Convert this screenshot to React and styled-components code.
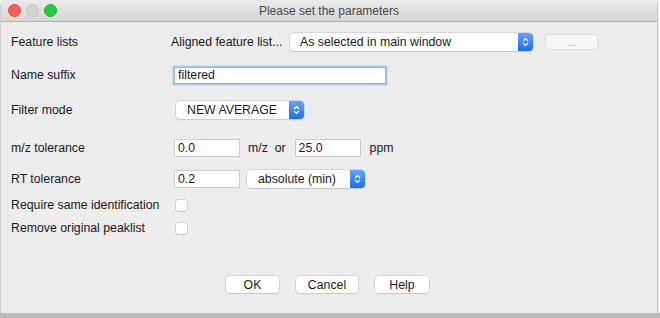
import React from 'react';
import styled, { createGlobalStyle } from 'styled-components';

const GlobalStyle = createGlobalStyle`
  html, body {
    margin: 0;
    padding: 0;
    background: #f4f4f4;
  }
  body {
    font-family: "Liberation Sans", Arial, sans-serif;
    font-size: 12.3px;
    color: #1b1b1b;
  }
`;

const Window = styled.div`
  width: 656px;
  height: 313px;
  background: #ececec;
  border-left: 1px solid #cfcfcf;
  border-right: 1px solid #c4c4c4;
  border-radius: 5px 5px 0 0;
  overflow: hidden;
  display: flex;
  flex-direction: column;
`;

const Ground = styled.div`
  width: 660px;
  height: 5px;
  background: #bcbcbc;
`;

const TitleBar = styled.div`
  height: 21px;
  flex: 0 0 21px;
  display: flex;
  align-items: center;
  position: relative;
  background: linear-gradient(#ebebeb, #d5d5d5);
  border-bottom: 1px solid #b4b4b4;
`;

const Lights = styled.div`
  display: flex;
  gap: 5px;
  padding-left: 7px;
`;

const Light = styled.span`
  width: 11px;
  height: 11px;
  border-radius: 50%;
  background: ${({ color }) => color};
  border: 0.5px solid ${({ edge }) => edge};
`;

const Title = styled.div`
  position: absolute;
  left: 0;
  right: 0;
  text-align: center;
  font-size: 12px;
  color: #4a4a4a;
  pointer-events: none;
`;

const Form = styled.div`
  padding: 10px 0 0 10px;
  display: flex;
  flex-direction: column;
`;

const Row = styled.div`
  display: flex;
  align-items: center;
  height: 20px;
  margin-top: ${({ gap }) => gap || 0}px;
`;

const Label = styled.div`
  width: 160px;
  flex: 0 0 160px;
  white-space: nowrap;
`;

const Cell = styled.div`
  display: flex;
  align-items: center;
  gap: ${({ gap }) => gap || 0}px;
  margin-left: ${({ shift }) => shift || 0}px;
`;

const Text = styled.span`
  white-space: pre;
  margin: ${({ m }) => m || '0'};
  ${({ w }) => w && `width: ${w}px;`}
`;

const Field = styled.div`
  box-sizing: border-box;
  width: ${({ w }) => w}px;
  height: 18px;
  background: #fff;
  border: 1px solid #cdcdcd;
  padding: 0 3px;
  display: flex;
  align-items: center;
  ${({ focus }) =>
    focus &&
    `
    border: 1px solid #8fb5e0;
    box-shadow: 0 0 0 1.5px #a9c9ee;
    height: 17px;
  `}
`;

const Combo = styled.div`
  box-sizing: border-box;
  width: ${({ w }) => w}px;
  height: 18px;
  background: #fff;
  border-radius: 4px;
  box-shadow: 0 0 0 0.5px #c2c2c2, 0 1px 1px rgba(0, 0, 0, 0.12);
  display: flex;
  align-items: center;
  overflow: hidden;
`;

const ComboText = styled.div`
  flex: 1;
  padding-left: ${({ pad }) => pad || 10}px;
  white-space: nowrap;
`;

const Arrow = styled.div`
  width: 15px;
  height: 100%;
  background: linear-gradient(#62a5f7, #1d6fe6);
  display: flex;
  align-items: center;
  justify-content: center;
`;

const Check = styled.span`
  width: 11px;
  height: 11px;
  box-sizing: border-box;
  background: #fff;
  border-radius: 2px;
  box-shadow: 0 0 0 0.5px #b8b8b8, 0 1px 1px rgba(0, 0, 0, 0.1);
  margin-left: 5px;
`;

const Dots = styled.div`
  width: 53px;
  height: 16px;
  background: #f6f6f6;
  border: 1px solid #dedede;
  border-radius: 4px;
  box-sizing: border-box;
  color: #a8a8a8;
  font-size: 10px;
  display: flex;
  align-items: center;
  justify-content: center;
  margin-left: 12px;
`;

const Footer = styled.div`
  margin-top: auto;
  margin-bottom: 20px;
  display: flex;
  justify-content: center;
  gap: 17px;
  padding-right: 3px;
`;

const Button = styled.div`
  box-sizing: border-box;
  width: ${({ w }) => w}px;
  height: 17px;
  background: #fff;
  border-radius: 4px;
  box-shadow: 0 0 0 0.5px #bdbdbd, 0 1px 1px rgba(0, 0, 0, 0.12);
  display: flex;
  align-items: center;
  justify-content: center;
`;

const Stepper = () => (
  <Arrow>
    <svg width="7" height="10" viewBox="0 0 7 10">
      <path d="M1 4 L3.5 1.5 L6 4 M1 6 L3.5 8.5 L6 6" fill="none" stroke="#fff" strokeWidth="1.2" />
    </svg>
  </Arrow>
);

export default function App() {
  return (
    <>
      <GlobalStyle />
      <Window>
        <TitleBar>
          <Lights>
            <Light color="#fc5f57" edge="#df4741" />
            <Light color="#d3d3d3" edge="#c2c2c2" />
            <Light color="#2ac940" edge="#1ea931" />
          </Lights>
          <Title>Please set the parameters</Title>
        </TitleBar>
        <Form>
          <Row>
            <Label>Feature lists</Label>
            <Cell>
              <Text w={119}>Aligned feature list...</Text>
              <Combo w={243}>
                <ComboText>As selected in main window</ComboText>
                <Stepper />
              </Combo>
            </Cell>
            <Dots>...</Dots>
          </Row>
          <Row gap={13}>
            <Label>Name suffix</Label>
            <Cell shift={3}>
              <Field w={212} focus>filtered</Field>
            </Cell>
          </Row>
          <Row gap={15}>
            <Label>Filter mode</Label>
            <Cell shift={5}>
              <Combo w={128}>
                <ComboText pad={11}>NEW AVERAGE</ComboText>
                <Stepper />
              </Combo>
            </Cell>
          </Row>
          <Row gap={18}>
            <Label>m/z tolerance</Label>
            <Cell shift={3}>
              <Field w={66}>0.0</Field>
              <Text m="0 9px 0 8px">m/z  or</Text>
              <Field w={66}>25.0</Field>
              <Text m="0 0 0 9px">ppm</Text>
            </Cell>
          </Row>
          <Row gap={11}>
            <Label>RT tolerance</Label>
            <Cell shift={3} gap={7}>
              <Field w={66}>0.2</Field>
              <Combo w={118}>
                <ComboText pad={11}>absolute (min)</ComboText>
                <Stepper />
              </Combo>
            </Cell>
          </Row>
          <Row gap={6}>
            <Label>Require same identification</Label>
            <Check />
          </Row>
          <Row gap={3}>
            <Label>Remove original peaklist</Label>
            <Check />
          </Row>
        </Form>
        <Footer>
          <Button w={53}>OK</Button>
          <Button w={62}>Cancel</Button>
          <Button w={54}>Help</Button>
        </Footer>
      </Window>
      <Ground />
    </>
  );
}
